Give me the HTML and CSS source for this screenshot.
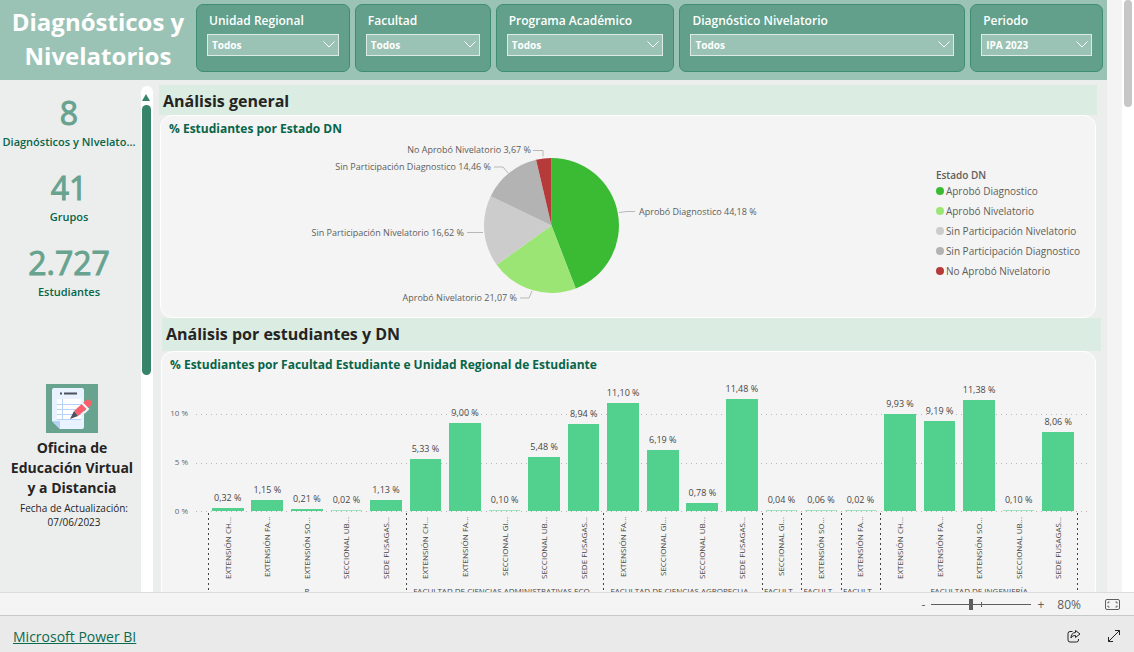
FILE: index.html
```html
<!DOCTYPE html>
<html lang="es">
<head>
<meta charset="utf-8">
<title>Diagnósticos y Nivelatorios</title>
<link rel="stylesheet" href="styles.css">
</head>
<body>
<div class="viewport">
  <div class="report">
    <header class="header">
      <h1 class="title">Diagnósticos y Nivelatorios</h1>
      <div class="filters">
        <div class="filter">
          <label for="f1">Unidad Regional</label>
          <div class="pick"><select id="f1"><option>Todos</option></select><svg viewBox="0 0 12 7"><path d="M.5.5 6 6 11.5.5"/></svg></div>
        </div>
        <div class="filter">
          <label for="f2">Facultad</label>
          <div class="pick"><select id="f2"><option>Todos</option></select><svg viewBox="0 0 12 7"><path d="M.5.5 6 6 11.5.5"/></svg></div>
        </div>
        <div class="filter">
          <label for="f3">Programa Académico</label>
          <div class="pick"><select id="f3"><option>Todos</option></select><svg viewBox="0 0 12 7"><path d="M.5.5 6 6 11.5.5"/></svg></div>
        </div>
        <div class="filter">
          <label for="f4">Diagnóstico Nivelatorio</label>
          <div class="pick"><select id="f4"><option>Todos</option></select><svg viewBox="0 0 12 7"><path d="M.5.5 6 6 11.5.5"/></svg></div>
        </div>
        <div class="filter">
          <label for="f5">Periodo</label>
          <div class="pick"><select id="f5"><option>IPA 2023</option></select><svg viewBox="0 0 12 7"><path d="M.5.5 6 6 11.5.5"/></svg></div>
        </div>
      </div>
    </header>
    <div class="content">
      <aside class="sidebar">
        <div class="kpi"><strong>8</strong><span>Diagnósticos y NIvelato...</span></div>
        <div class="kpi"><strong>41</strong><span>Grupos</span></div>
        <div class="kpi"><strong>2.727</strong><span>Estudiantes</span></div>
        <div class="office">
          <svg class="logo" viewBox="0 0 52 49">
            <path fill="#68a38f" d="M0 0h52v49H0z"/>
            <path fill="#e9f2ff" d="M8 4h28a2 2 0 0 1 2 2v37a2 2 0 0 1-2 2H14l-8-8V6a2 2 0 0 1 2-2z"/>
            <path fill="#fff" d="M11 15h24v21H11z"/>
            <path fill="none" stroke="#b5d3f7" d="M11 20.5h24M11 25.5h24M11 30.5h24M11 35.5h24M16.500 15v21"/>
            <path fill="#b5d3f7" d="M6 37h7a1 1 0 0 1 1 1v7z"/>
            <path stroke="#4b5160" stroke-width="2" d="M14 9.500h2M18 9.500h13"/>
            <path fill="#fb5f6c" d="m28 27 11-10q4-3 6 0t-1 5L32 32z"/>
            <path fill="#4b5160" d="m24 35 4-8 4 5z"/>
            <path fill="none" stroke="#f3f7ff" stroke-width="2" d="m36 19 6 6-4 4"/>
          </svg>
          <h2>Oficina de Educación Virtual y a Distancia</h2>
          <p>Fecha de Actualización: 07/06/2023</p>
        </div>
      </aside>
      <div class="track"><i class="arrow"></i><i class="thumb"></i></div>
      <main class="main">
        <h2 class="band">Análisis general</h2>
        <section class="panel pie-panel">
          <h3>% Estudiantes por Estado DN</h3>
          <div class="pie-row">
            <svg class="pie" viewBox="300 139 470 168">
              <path fill="#3bbb33" d="M551.500 225.500V158A67.500 67.500 0 0 1 575.700 288.500z"/>
              <path fill="#9ae573" d="M551.500 225.500 575.700 288.500A67.500 67.500 0 0 1 496.600 264.700z"/>
              <path fill="#ccc" d="M551.500 225.500 496.600 264.700A67.500 67.500 0 0 1 490.700 196.200z"/>
              <path fill="#b3b3b3" d="M551.500 225.500 490.700 196.200A67.500 67.500 0 0 1 536.100 159.800z"/>
              <path fill="#b63a3a" d="M551.500 225.500 536.100 159.800A67.500 67.500 0 0 1 551.500 158z"/>
              <path class="leader" d="M533 150.500h10v6M494 167h9l5 6M467 232.500h16M520 298h9l3-7M619 212.500l8-1h8"/>
              <text x="531" y="153" text-anchor="end">No Aprobó Nivelatorio 3,67 %</text>
              <text x="491" y="170" text-anchor="end">Sin Participación Diagnostico 14,46 %</text>
              <text x="464" y="236" text-anchor="end">Sin Participación Nivelatorio 16,62 %</text>
              <text x="517" y="301" text-anchor="end">Aprobó Nivelatorio 21,07 %</text>
              <text x="639" y="215">Aprobó Diagnostico 44,18 %</text>
            </svg>
            <div class="legend">
              <h4>Estado DN</h4>
              <ul>
                <li class="green">Aprobó Diagnostico</li>
                <li class="lime">Aprobó Nivelatorio</li>
                <li class="silver">Sin Participación Nivelatorio</li>
                <li class="gray">Sin Participación Diagnostico</li>
                <li class="red">No Aprobó Nivelatorio</li>
              </ul>
            </div>
          </div>
        </section>
        <h2 class="band band-wide">Análisis por estudiantes y DN</h2>
        <section class="panel bar-panel">
          <h3>% Estudiantes por Facultad Estudiante e Unidad Regional de Estudiante</h3>
          <div class="chart">
            <div class="axis"><span>10 %</span><span>5 %</span><span>0 %</span></div>
            <div class="plot">
              <svg class="grid"><line x1="0" x2="100%" y1="34.500" y2="34.500"/><line x1="0" x2="100%" y1="83.500" y2="83.500"/><line x1="0" x2="100%" y1="131.500" y2="131.500"/></svg>
              <div class="groups">
                <div class="group n5">
                  <div class="col"><div class="bar-box"><b>0,32 %</b><i style="height:2.4%"></i></div><span>EXTENSIÓN CH...</span></div>
                  <div class="col"><div class="bar-box"><b>1,15 %</b><i style="height:8.6%"></i></div><span>EXTENSIÓN FA...</span></div>
                  <div class="col"><div class="bar-box"><b>0,21 %</b><i style="height:1.6%"></i></div><span>EXTENSIÓN SO...</span></div>
                  <div class="col"><div class="bar-box"><b>0,02 %</b><i class="tiny" style="height:0.1%"></i></div><span>SECCIONAL UB...</span></div>
                  <div class="col"><div class="bar-box"><b>1,13 %</b><i style="height:8.4%"></i></div><span>SEDE FUSAGAS...</span></div>
                  <em>P</em>
                </div>
                <div class="group n5">
                  <div class="col"><div class="bar-box"><b>5,33 %</b><i style="height:39.7%"></i></div><span>EXTENSIÓN CH...</span></div>
                  <div class="col"><div class="bar-box"><b>9,00 %</b><i style="height:67.1%"></i></div><span>EXTENSIÓN FA...</span></div>
                  <div class="col"><div class="bar-box"><b>0,10 %</b><i class="tiny" style="height:0.7%"></i></div><span>SECCIONAL GI...</span></div>
                  <div class="col"><div class="bar-box"><b>5,48 %</b><i style="height:40.9%"></i></div><span>SECCIONAL UB...</span></div>
                  <div class="col"><div class="bar-box"><b>8,94 %</b><i style="height:66.7%"></i></div><span>SEDE FUSAGAS...</span></div>
                  <em>FACULTAD DE CIENCIAS ADMINISTRATIVAS ECO...</em>
                </div>
                <div class="group n4">
                  <div class="col"><div class="bar-box"><b>11,10 %</b><i style="height:82.8%"></i></div><span>EXTENSIÓN FA...</span></div>
                  <div class="col"><div class="bar-box"><b>6,19 %</b><i style="height:46.2%"></i></div><span>SECCIONAL GI...</span></div>
                  <div class="col"><div class="bar-box"><b>0,78 %</b><i style="height:5.8%"></i></div><span>SECCIONAL UB...</span></div>
                  <div class="col"><div class="bar-box"><b>11,48 %</b><i style="height:85.6%"></i></div><span>SEDE FUSAGAS...</span></div>
                  <em>FACULTAD DE CIENCIAS AGROPECUA...</em>
                </div>
                <div class="group n1">
                  <div class="col"><div class="bar-box"><b>0,04 %</b><i class="tiny" style="height:0.3%"></i></div><span>SECCIONAL GI...</span></div>
                  <em>FACULT...</em>
                </div>
                <div class="group n1">
                  <div class="col"><div class="bar-box"><b>0,06 %</b><i class="tiny" style="height:0.4%"></i></div><span>EXTENSIÓN SO...</span></div>
                  <em>FACULT...</em>
                </div>
                <div class="group n1">
                  <div class="col"><div class="bar-box"><b>0,02 %</b><i class="tiny" style="height:0.1%"></i></div><span>EXTENSIÓN FA...</span></div>
                  <em>FACULT...</em>
                </div>
                <div class="group n5">
                  <div class="col"><div class="bar-box"><b>9,93 %</b><i style="height:74.1%"></i></div><span>EXTENSIÓN CH...</span></div>
                  <div class="col"><div class="bar-box"><b>9,19 %</b><i style="height:68.5%"></i></div><span>EXTENSIÓN FA...</span></div>
                  <div class="col"><div class="bar-box"><b>11,38 %</b><i style="height:84.9%"></i></div><span>EXTENSIÓN SO...</span></div>
                  <div class="col"><div class="bar-box"><b>0,10 %</b><i class="tiny" style="height:0.7%"></i></div><span>SECCIONAL UB...</span></div>
                  <div class="col"><div class="bar-box"><b>8,06 %</b><i style="height:60.1%"></i></div><span>SEDE FUSAGAS...</span></div>
                  <em>FACULTAD DE INGENIERÍA</em>
                </div>
              </div>
            </div>
          </div>
        </section>
      </main>
    </div>
  </div>
  <div class="page-track"><i></i></div>
</div>
<div class="zoombar">
  <button aria-label="Alejar">-</button>
  <input type="range" min="10" max="190" value="80" aria-label="Zoom">
  <button aria-label="Acercar">+</button>
  <output>80%</output>
  <button class="fit" aria-label="Ajustar a la página"><svg viewBox="0 0 15 11"><rect x=".5" y=".5" width="14" height="10" rx="1.500"/><path d="M3 4.500V3h1.500M10.500 3H12v1.500M12 6.500V8h-1.500M4.500 8H3V6.500"/></svg></button>
</div>
<footer class="footer">
  <a href="#">Microsoft Power BI</a>
  <button aria-label="Compartir"><svg viewBox="0 0 14 14"><path d="M5.500 2.500H3a2 2 0 0 0-2 2V11a2 2 0 0 0 2 2h6.500a2 2 0 0 0 2-2v-1M8.500 1.500v2C5.500 3.500 4 6 4 9c1-2 2.500-2.500 4.500-2.500v2L13 5z"/></svg></button>
  <button aria-label="Pantalla completa"><svg viewBox="0 0 14 14"><path d="M1.500 12.500l11-11M8 1.500h4.500V6M1.500 8v4.500H6"/></svg></button>
</footer>
</body>
</html>
```
FILE: styles.css
```css
* { box-sizing: border-box; }
body {
  margin: 0;
  height: 100vh;
  display: flex;
  flex-direction: column;
  overflow: hidden;
  background: #f4f4f4;
  color: #252423;
  font-family: "Open Sans", "Noto Sans", sans-serif;
}
h1, h2, h3, h4, p, ul { margin: 0; padding: 0; }
button { border: 0; padding: 0; background: none; font: inherit; color: inherit; }
svg { display: block; fill: none; }
.viewport { flex: 1; min-height: 0; display: flex; overflow: hidden; }
.report { flex: 1; min-width: 0; margin-right: 15px; background: #eceeee; display: flex; flex-direction: column; }
.page-track { width: 12px; background: #fff; padding: 0 2px; }
.page-track i { display: block; height: 107px; border-radius: 4px; background: #c7c7c7; }

.header { display: flex; height: 80px; flex: none; background: #9bc3b5; padding: 4px 4px 8px 0; }
.title { width: 196px; flex: none; padding: 1px 7px 0; text-align: center; color: #fff; font-size: 24px; line-height: 34px; font-weight: 700; }
.filters { flex: 1; display: grid; grid-template-columns: 154fr 136fr 179fr 286fr 133fr; gap: 5px; }
.filter { border: 1px solid #3f8e73; border-radius: 7px; background: #62a08b; padding: 6px 10px; color: #fff; font-weight: 600; }
.filter label { display: block; padding-left: 2px; font-size: 12px; line-height: 20px; margin-bottom: 3px; white-space: nowrap; }
.pick { position: relative; }
.pick select { appearance: none; display: block; width: 100%; height: 22px; padding: 0 4px; border: 1px solid #dcebe5; border-radius: 0; background: #9bc3b5; color: #fff; font: 700 10px "Open Sans", sans-serif; }
.pick svg { position: absolute; right: 4px; top: 7px; width: 12px; height: 7px; stroke: #fff; pointer-events: none; }

.content { flex: 1; min-height: 0; display: flex; overflow: hidden; }
.sidebar { width: 141px; flex: none; padding-top: 14px; display: flex; flex-direction: column; }
.kpi { height: 75px; flex: none; padding-right: 3px; text-align: center; display: flex; flex-direction: column; white-space: nowrap; }
.kpi strong { font-size: 32px; line-height: 38px; margin-bottom: 2px; font-weight: 400; color: #68a38f; -webkit-text-stroke: 1px #68a38f; }
.kpi span { font-size: 11px; line-height: 16px; font-weight: 600; color: #076548; }
.office { padding: 65px 4px 0 7px; text-align: center; }
.logo { width: 52px; height: 49px; margin: 0 auto 5px; }
.office h2 { font-size: 14px; line-height: 20px; font-weight: 700; }
.office p { padding: 3px 6px 0 10px; font-size: 10px; line-height: 14px; }
.track { width: 12px; flex: none; margin-top: 6px; background: #fff; border-radius: 6px 6px 0 0; padding: 8px 1px 0; }
.arrow { display: block; width: 8px; margin: 0 0 4px; border: 4px solid transparent; border-top: 0; border-bottom: 7px solid #36846a; }
.thumb { display: block; width: 9px; height: 270px; border-radius: 5px; background: #36846a; }

.main { flex: 1; min-width: 0; padding: 5px 10px 0 6px; }
.band { height: 30px; background: #dbede2; padding-left: 4px; font-size: 16px; line-height: 32px; font-weight: 700; }
.band-wide { height: 33px; margin: 0 -4px 0 3px; line-height: 32px; }
.panel { border: 1px solid #fff; border-radius: 12px; background: #f4f4f4; padding: 3px 8px; margin: 0 1px; }
.panel h3 { font-size: 12px; line-height: 20px; font-weight: 700; color: #076548; white-space: nowrap; }
.pie-panel { height: 203px; }
.pie-row { display: flex; padding-left: 131px; }
.pie { width: 470px; height: 168px; flex: none; }
.pie text { fill: #605e5c; font-size: 9px; }
.leader { stroke: #b8b8b8; }
.legend { margin: 28px 0 0 auto; padding-right: 7px; color: #605e5c; white-space: nowrap; }
.legend h4 { font-size: 10px; line-height: 16px; font-weight: 600; }
.legend li { list-style: none; display: flex; align-items: center; gap: 2px; font-size: 10px; line-height: 16px; margin-bottom: 4px; }
.legend li::before { content: ""; width: 8px; height: 8px; border-radius: 50%; background: var(--dot); }
.green { --dot: #3bbb33; }
.lime { --dot: #9ae573; }
.silver { --dot: #ccc; }
.gray { --dot: #b3b3b3; }
.red { --dot: #b63a3a; }

.bar-panel { margin-left: 2px; }
.chart { display: flex; padding-top: 5px; }
.axis { width: 18px; height: 137px; flex: none; display: flex; flex-direction: column; justify-content: flex-end; gap: 37px; text-align: right; font-size: 8px; line-height: 12px; color: #666; white-space: nowrap; }
.plot { position: relative; flex: 1; margin-left: 8px; padding: 0 9px 0 12px; }
.grid { position: absolute; left: 0; top: 0; width: 100%; height: 140px; stroke: #b8b8b8; stroke-dasharray: 1 4; }
.groups { position: relative; display: grid; grid-template-columns: 5fr 5fr 4fr 1fr 1fr 1fr 5fr; }
.group { position: relative; display: grid; min-width: 0; }
.group::before, .group:last-child::after { content: ""; position: absolute; left: 0; top: 133px; bottom: 0; width: 1px; background: repeating-linear-gradient(#444 0 2px, transparent 2px 5px); }
.group:last-child::after { left: auto; right: 0; }
.n5 { grid-template-columns: repeat(5, 1fr); }
.n4 { grid-template-columns: repeat(4, 1fr); }
.n1 { grid-template-columns: 1fr; }
.group em { grid-column: 1 / -1; text-align: center; font-style: normal; font-size: 8px; line-height: 12px; color: #484644; white-space: nowrap; }
.col { display: flex; flex-direction: column; align-items: center; min-width: 0; }
.bar-box { width: 100%; height: 131px; display: flex; flex-direction: column; align-items: center; justify-content: flex-end; }
.bar-box b { font-size: 9px; line-height: 12px; margin-bottom: 4px; font-weight: 400; color: #484644; white-space: nowrap; }
.bar-box i { width: 80%; flex: none; background: #52d08d; }
.bar-box .tiny { min-height: 1px; background: #9fe3bf; }
.col span { height: 74px; padding-bottom: 6px; writing-mode: vertical-rl; transform: rotate(180deg); text-align: right; font-size: 8px; line-height: 12px; color: #484644; white-space: nowrap; }

.zoombar { height: 24px; flex: none; border-top: 1px solid #dcdcdc; border-bottom: 1px solid #c8c8c8; display: flex; align-items: center; justify-content: flex-end; gap: 6px; padding-right: 14px; font-size: 12px; color: #605e5c; }
.zoombar input { appearance: none; width: 100px; height: 12px; margin: 0; background: linear-gradient(#605e5c, #605e5c) 50% 50% / 1px 5px no-repeat, linear-gradient(#605e5c, #605e5c) 0 50% / 100% 1px no-repeat; }
.zoombar input::-webkit-slider-thumb { appearance: none; width: 4px; height: 11px; background: #605e5c; }
.zoombar output { margin: 0 18px 0 7px; }
.fit svg { width: 15px; height: 11px; stroke: #605e5c; }
.footer { height: 36px; flex: none; background: #eaeaea; display: flex; align-items: center; gap: 26px; padding: 4px 13px 0; }
.footer a { margin-right: auto; color: #0b6b50; font-size: 14px; }
.footer svg { width: 14px; height: 14px; stroke: #252423; }
```
